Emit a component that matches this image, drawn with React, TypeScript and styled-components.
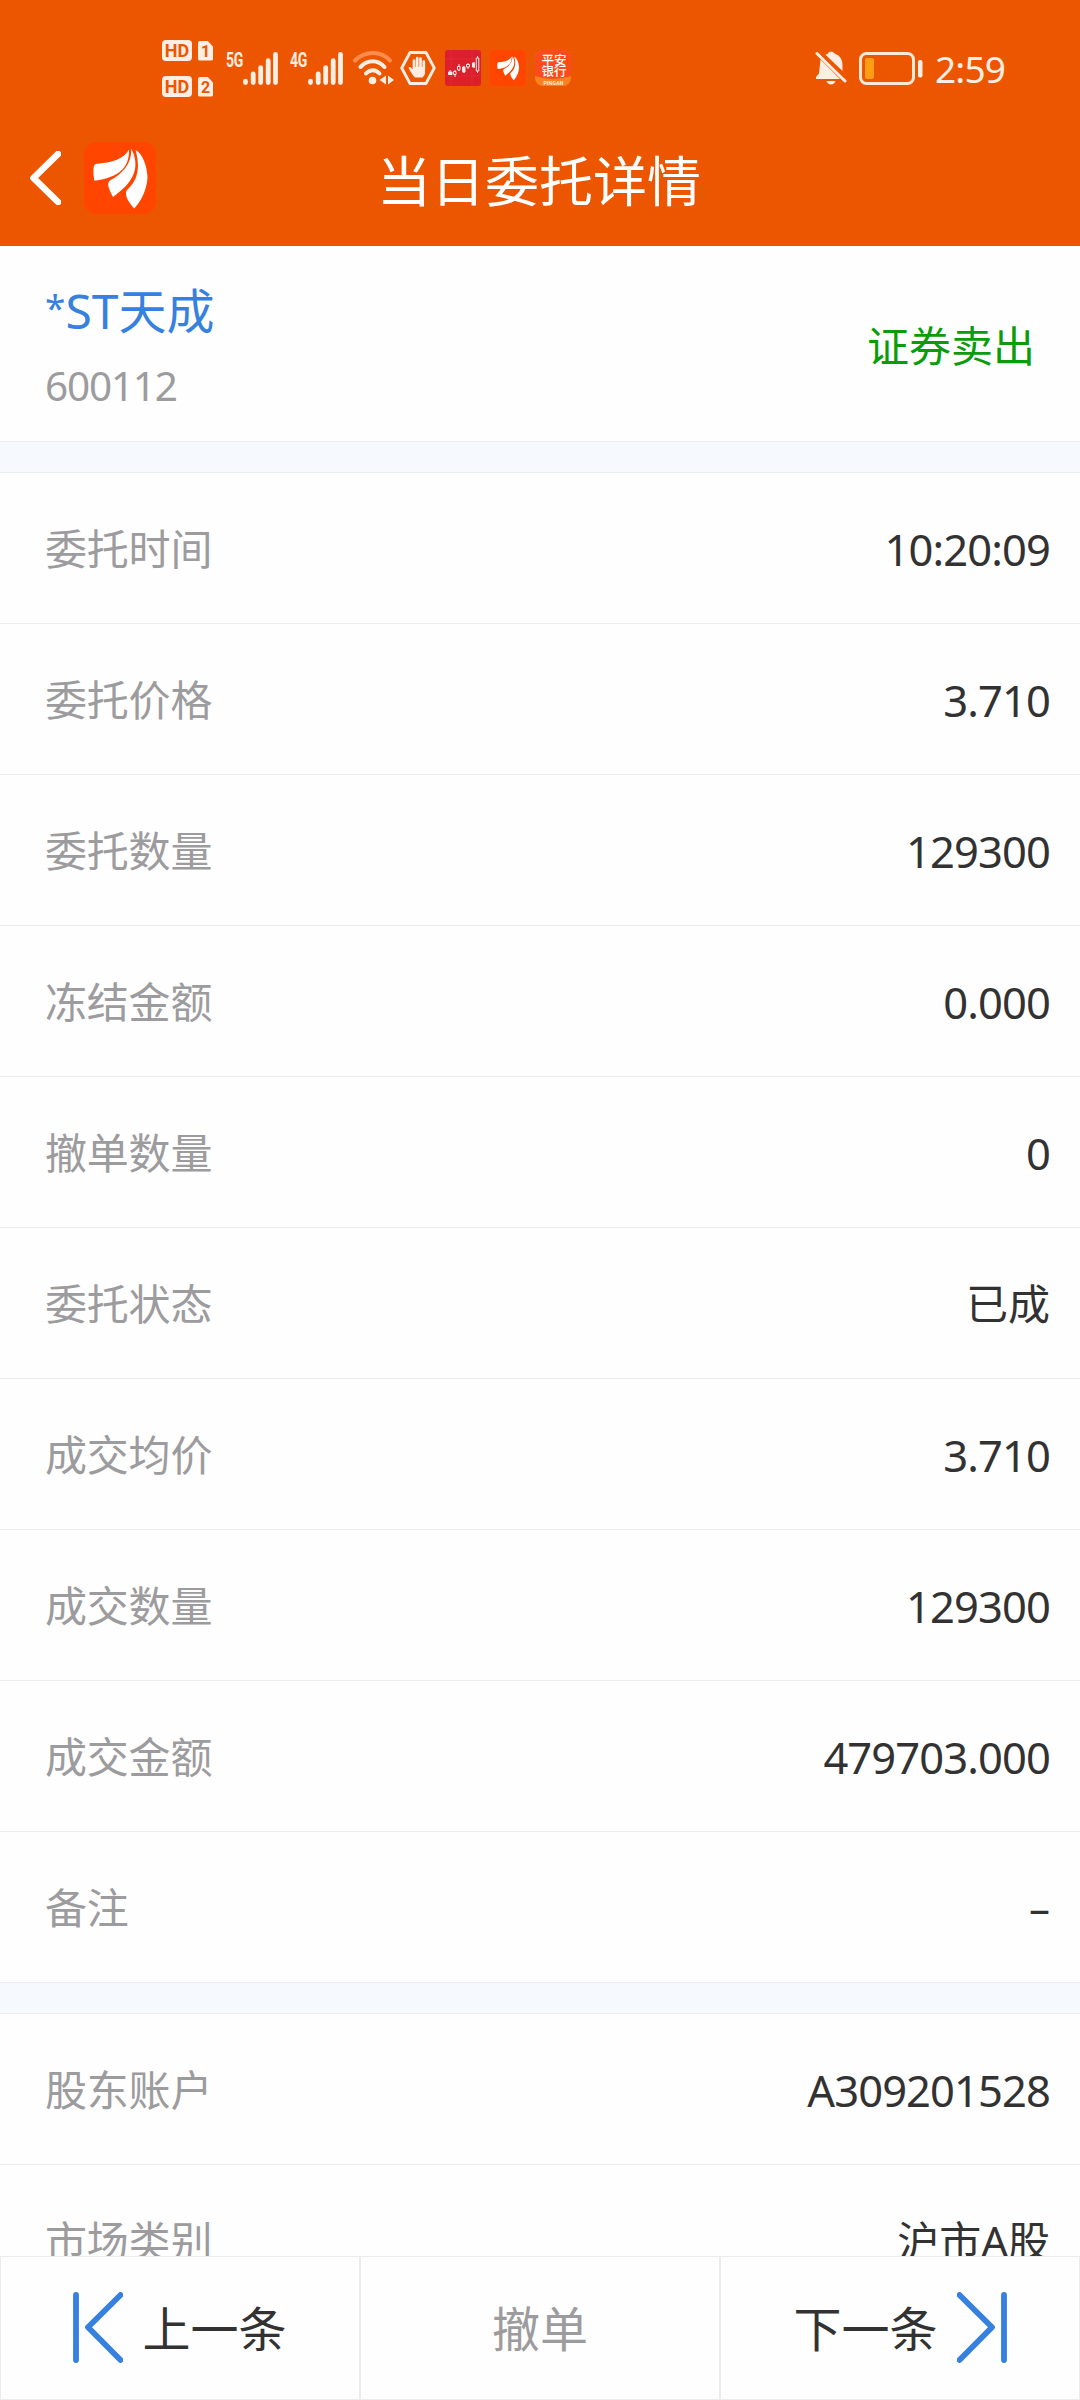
import React from "react";
import styled, { createGlobalStyle } from "styled-components";

const GlobalStyle = createGlobalStyle`
  * { box-sizing: border-box; }
  html, body { margin: 0; padding: 0; background: #fefefe; }
  body { font-family: "Noto Sans", "Noto Sans CJK SC", sans-serif; }
`;

const Screen = styled.div`
  width: 1080px;
  height: 2400px;
  display: flex;
  flex-direction: column;
  overflow: hidden;
  background: #fefefe;
  color: #323232;
`;

const Header = styled.header`
  flex: none;
  height: 246px;
  background: #ed5600;
`;

const StatusBar = styled.div`
  height: 110px;
  padding: 26px 75px 0 162px;
  display: flex;
  justify-content: space-between;
  align-items: center;
`;

const StatusGroup = styled.div`
  display: flex;
  align-items: center;
`;

const Slot = styled.span<{ $ml?: number }>`
  display: flex;
  margin-left: ${(p) => p.$ml ?? 9}px;
  svg { display: block; }
`;

const SimColumn = styled.div`
  display: flex;
  flex-direction: column;
  gap: 15px;
`;

const SimRow = styled.div`
  display: flex;
  gap: 6px;
  font-family: Roboto, sans-serif;
  font-weight: 700;
  color: #ed5600;
`;

const HdBadge = styled.span`
  width: 30px;
  height: 21px;
  border-radius: 4px;
  background: #ffeee4;
  font-size: 18px;
  line-height: 22px;
  text-align: center;
`;

const SimCard = styled.span`
  width: 15px;
  height: 20px;
  margin-top: 1px;
  background: #ffeee4;
  border-radius: 2px;
  clip-path: polygon(0 0, 62% 0, 100% 30%, 100% 100%, 0 100%);
  font-size: 16px;
  line-height: 21px;
  text-align: center;
`;

const NetLabel = styled.span<{ $ml: number }>`
  width: 17px;
  height: 33px;
  margin-left: ${(p) => p.$ml}px;
  font-family: Roboto, sans-serif;
  font-weight: 700;
  font-size: 20px;
  line-height: 16px;
  letter-spacing: -0.5px;
  color: #ffeee4;
  transform: scaleX(0.7);
  transform-origin: left;
`;

const Clock = styled.span`
  margin-left: 12px;
  margin-top: 2px;
  width: 70px;
  font-size: 37px;
  line-height: 40px;
  letter-spacing: -0.8px;
  color: #ffeee4;
`;

const TitleBar = styled.div`
  height: 136px;
  padding: 0 30px;
  display: grid;
  grid-template-columns: 160px 1fr 160px;
  align-items: center;
`;

const NavIcons = styled.div`
  display: flex;
  align-items: center;
  gap: 23px;
  margin-top: -1px;
  svg { display: block; }
`;

const Title = styled.h1`
  margin: 6px 2px 0 0;
  font-size: 54px;
  line-height: 60px;
  font-weight: 400;
  color: #fff;
  text-align: center;
`;

const Content = styled.main`
  flex: 1;
  min-height: 0;
  overflow: hidden;
`;

const StockPanel = styled.section`
  height: 196px;
  padding: 0 45px;
  border-bottom: 1px solid #ebebeb;
  display: flex;
  justify-content: space-between;
  align-items: center;
`;

const StockName = styled.div`
  margin-top: 4px;
  font-size: 48px;
  line-height: 60px;
  color: #3681e0;
`;

const Star = styled.span`
  font-size: 37px;
  line-height: 0;
  vertical-align: 8px;
`;

const StockCode = styled.div`
  margin-top: 20px;
  font-size: 40.5px;
  line-height: 50px;
  letter-spacing: -1.2px;
  color: #9c9b9d;
`;

const Side = styled.div`
  margin-top: 5px;
  font-size: 42px;
  line-height: 50px;
  color: #0b9c0b;
`;

const Band = styled.div`
  height: 31px;
  background: #f6faff;
  border-bottom: 1px solid #ebebeb;
`;

const Row = styled.div`
  height: 151px;
  padding: 2px 30px 0 45px;
  border-bottom: 1px solid #ebebeb;
  display: flex;
  justify-content: space-between;
  align-items: center;
  line-height: 56px;
`;

const Label = styled.span`
  font-size: 42px;
  letter-spacing: -0.2px;
  color: #9c9b9d;
`;

const Value = styled.span<{ $numeric: boolean }>`
  font-size: ${(p) => (p.$numeric ? 43.5 : 42)}px;
  letter-spacing: ${(p) => (p.$numeric ? -0.9 : 0)}px;
`;

const Footer = styled.footer`
  flex: none;
  height: 144px;
  display: grid;
  grid-template-columns: repeat(3, 1fr);
`;

const FootButton = styled.button<{ $muted?: boolean }>`
  border: 1px solid #ebebeb;
  background: #fefefe;
  padding: 2px 0 0;
  display: flex;
  justify-content: center;
  align-items: center;
  gap: 19px;
  font-family: inherit;
  font-size: 48px;
  line-height: 60px;
  color: ${(p) => (p.$muted ? "#9c9b9d" : "#323232")};
  svg { display: block; margin-top: -3px; }
`;

const Signal = () => (
  <svg width="35" height="33" viewBox="0 0 35 33" stroke="#ffeee4" strokeWidth="4.8" strokeLinecap="round">
    <path d="M2.5 29.2v1.3M10.2 22v8.5M17.7 15.6v14.9M25.2 8.7v21.8M32.5 2.5v28" />
  </svg>
);

const Wifi = () => (
  <svg width="41" height="34" viewBox="0 0 41 34" fill="none" strokeLinecap="round" strokeWidth="4">
    <path d="M2 9.5C12-.5 28-.5 37 9.5" stroke="#ff8c4d" />
    <path d="M7.5 16c7.200-7.600 17-7.600 24 0M13 22.500c4-4.300 9.500-4.300 13.500 0" stroke="#ffeee4" />
    <circle cx="19.500" cy="29.500" r="3.800" fill="#ffeee4" />
    <path d="M33 24.500v9l-6.500-4.500zM35 24.500v9l6-4.500z" fill="#ffeee4" />
  </svg>
);

const StopHand = () => (
  <svg width="36" height="36" viewBox="0 0 36 36" fill="none">
    <path d="M10 2.500h16l8.300 15.500L26 33.500H10L1.700 18z" stroke="#ffeee4" strokeWidth="2.800" strokeLinejoin="round" />
    <path d="M14 20V10.500M17.200 18V8.200M20.500 18V8.700M23.800 20V11.500" stroke="#ffeee4" strokeWidth="2.700" strokeLinecap="round" />
    <path d="M12.800 17h12.200v5.500c0 2-1 3.500-2.500 5H15c-2-1.500-4-5-6.300-9.200-.4-1.300 1.200-1.800 2-.9l2.100 2z" fill="#ffeee4" />
  </svg>
);

const ChartApp = () => (
  <svg width="36" height="36" viewBox="0 0 36 36">
    <rect width="36" height="36" rx="3" fill="#dc1f2c" />
    <path d="M0 9h36M0 26h36M6 0v36M27 0v36" stroke="#e5333e" strokeWidth=".6" />
    <g stroke="#ffe9e6" strokeWidth="1">
      <path d="M5 20v5M10 20v7M14 14v7M19 16v7M23 13v6M29 12v6M32.500 6v17" />
      <path d="M3.500 22h3.500v2.500H3.500zM17.500 17h2.500v5h-2.500zM27.500 13h2v4h-2z" fill="#ffe9e6" />
      <path d="M8.500 21.500h2.500v3h-2.500zM12.500 16.500h2.500v3.500h-2.500zM21.500 14.500h3v2.500h-3zM31.300 8h2.500v13h-2.500z" fill="#dc1f2c" />
    </g>
  </svg>
);

const Feathers = ({ size, radius, inset = 0 }: { size: number; radius: number; inset?: number }) => (
  <svg width={size} height={size} viewBox="0 0 72 72">
    <rect width="72" height="72" rx={radius} fill="#ff4500" />
    <g fill="#fff" transform={`translate(${inset} ${inset}) scale(${1 - inset / 36})`}>
      <path d="M45 7.500C40 17 29 20.500 11.500 22c-2.500 1-2.500 8-1.200 16.700C27 36.500 46 30.500 45 7.500z" />
      <path d="M47.200 6.500C48 22 38 32 26 38.500c-4 3-.5 9.500 3 16.500C41 46 60 31 47.200 6.500z" />
      <path d="M51.500 8C57 27 53 39 43 48c-3.500 4.500 2 12.500 7.200 18.500C58 58 63 47 63.500 35 63 23 58 11 51.500 8z" />
    </g>
  </svg>
);

const BankApp = () => (
  <svg width="36" height="36" viewBox="0 0 36 36">
    <defs>
      <clipPath id="bank"><rect width="36" height="36" rx="8" /></clipPath>
    </defs>
    <g clipPath="url(#bank)">
      <rect width="36" height="36" fill="#f9821e" />
      <path d="M0 0h36v26Q18 32 0 26z" fill="#fa4b1c" />
    </g>
    <g fill="#fff" fontFamily="Noto Sans CJK SC, sans-serif" fontWeight="500" textAnchor="middle">
      <text x="19" y="15" fontSize="12.500">平安</text>
      <text x="19" y="26" fontSize="12.500">银行</text>
      <text x="18.500" y="35" fontSize="5" fontFamily="Roboto, sans-serif" letterSpacing=".3">PINGAN</text>
    </g>
  </svg>
);

const MutedBell = () => (
  <svg width="32" height="34" viewBox="0 0 32 34" fill="#ffeee4">
    <path d="M13 2.500C13.500.2 18.500.2 19.500 2.500 25.500 4.500 27.500 9.500 27.500 14v6L10.500 3.800z" />
    <path d="M5.500 8.500 25 28H1v-2l3-3.500z" />
    <path d="M11.500 30h9c-1 4.500-8 4.500-9 0z" />
    <path d="M2 2.500 30 30" stroke="#ffeee4" strokeWidth="3" strokeLinecap="round" />
    <path d="M7 3.500 29 25.200" stroke="#ed5600" strokeWidth="2" />
  </svg>
);

const Battery = () => (
  <svg width="64" height="33" viewBox="0 0 64 33" fill="none">
    <rect x="1.500" y="1.500" width="53" height="30" rx="6" stroke="#ffe9d6" strokeWidth="3" />
    <rect x="6" y="6" width="9" height="21" rx="2" fill="#ff9d14" />
    <rect x="59" y="8" width="4.500" height="17.500" rx="2" fill="#ffeee4" />
  </svg>
);

const BackArrow = () => (
  <svg width="31" height="54" viewBox="0 0 31 54" fill="none">
    <path d="M28 3 3.500 27 28 51" stroke="#fff" strokeWidth="6.600" strokeLinecap="round" strokeLinejoin="round" />
  </svg>
);

const StepArrow = ({ forward = false }: { forward?: boolean }) => (
  <svg width="50" height="71" viewBox="0 0 50 71" fill="none">
    <g
      transform={forward ? "translate(50 0) scale(-1 1)" : undefined}
      stroke="#3681e0"
      strokeWidth="5.800"
      strokeLinecap="round"
      strokeLinejoin="round"
    >
      <path d="M3 3v65M47.500 3 15 35.300 47.500 68" />
    </g>
  </svg>
);

const orderRows = [
  ["委托时间", "10:20:09"],
  ["委托价格", "3.710"],
  ["委托数量", "129300"],
  ["冻结金额", "0.000"],
  ["撤单数量", "0"],
  ["委托状态", "已成"],
  ["成交均价", "3.710"],
  ["成交数量", "129300"],
  ["成交金额", "479703.000"],
  ["备注", "–"],
];

const accountRows = [
  ["股东账户", "A309201528"],
  ["市场类别", "沪市A股"],
];

const Rows = ({ items }: { items: string[][] }) => (
  <>
    {items.map(([label, value]) => (
      <Row key={label}>
        <Label>{label}</Label>
        <Value $numeric={/\d/.test(value)}>{value}</Value>
      </Row>
    ))}
  </>
);

export default function App() {
  return (
    <Screen>
      <GlobalStyle />
      <Header>
        <StatusBar>
          <StatusGroup>
            <SimColumn>
              {[1, 2].map((n) => (
                <SimRow key={n}>
                  <HdBadge>HD</HdBadge>
                  <SimCard>{n}</SimCard>
                </SimRow>
              ))}
            </SimColumn>
            <NetLabel $ml={13}>5G</NetLabel>
            <Slot $ml={0}><Signal /></Slot>
            <NetLabel $ml={12}>4G</NetLabel>
            <Slot $ml={1}><Signal /></Slot>
            <Slot $ml={10}><Wifi /></Slot>
            <Slot $ml={6}><StopHand /></Slot>
            <Slot><ChartApp /></Slot>
            <Slot><Feathers size={36} radius={4} inset={7} /></Slot>
            <Slot><BankApp /></Slot>
          </StatusGroup>
          <StatusGroup>
            <MutedBell />
            <Slot $ml={12}><Battery /></Slot>
            <Clock>2:59</Clock>
          </StatusGroup>
        </StatusBar>
        <TitleBar>
          <NavIcons>
            <BackArrow />
            <Feathers size={72} radius={13} />
          </NavIcons>
          <Title>当日委托详情</Title>
        </TitleBar>
      </Header>
      <Content>
        <StockPanel>
          <div>
            <StockName><Star>*</Star>ST天成</StockName>
            <StockCode>600112</StockCode>
          </div>
          <Side>证券卖出</Side>
        </StockPanel>
        <Band />
        <Rows items={orderRows} />
        <Band />
        <Rows items={accountRows} />
      </Content>
      <Footer>
        <FootButton><StepArrow />上一条</FootButton>
        <FootButton $muted>撤单</FootButton>
        <FootButton>下一条<StepArrow forward /></FootButton>
      </Footer>
    </Screen>
  );
}
